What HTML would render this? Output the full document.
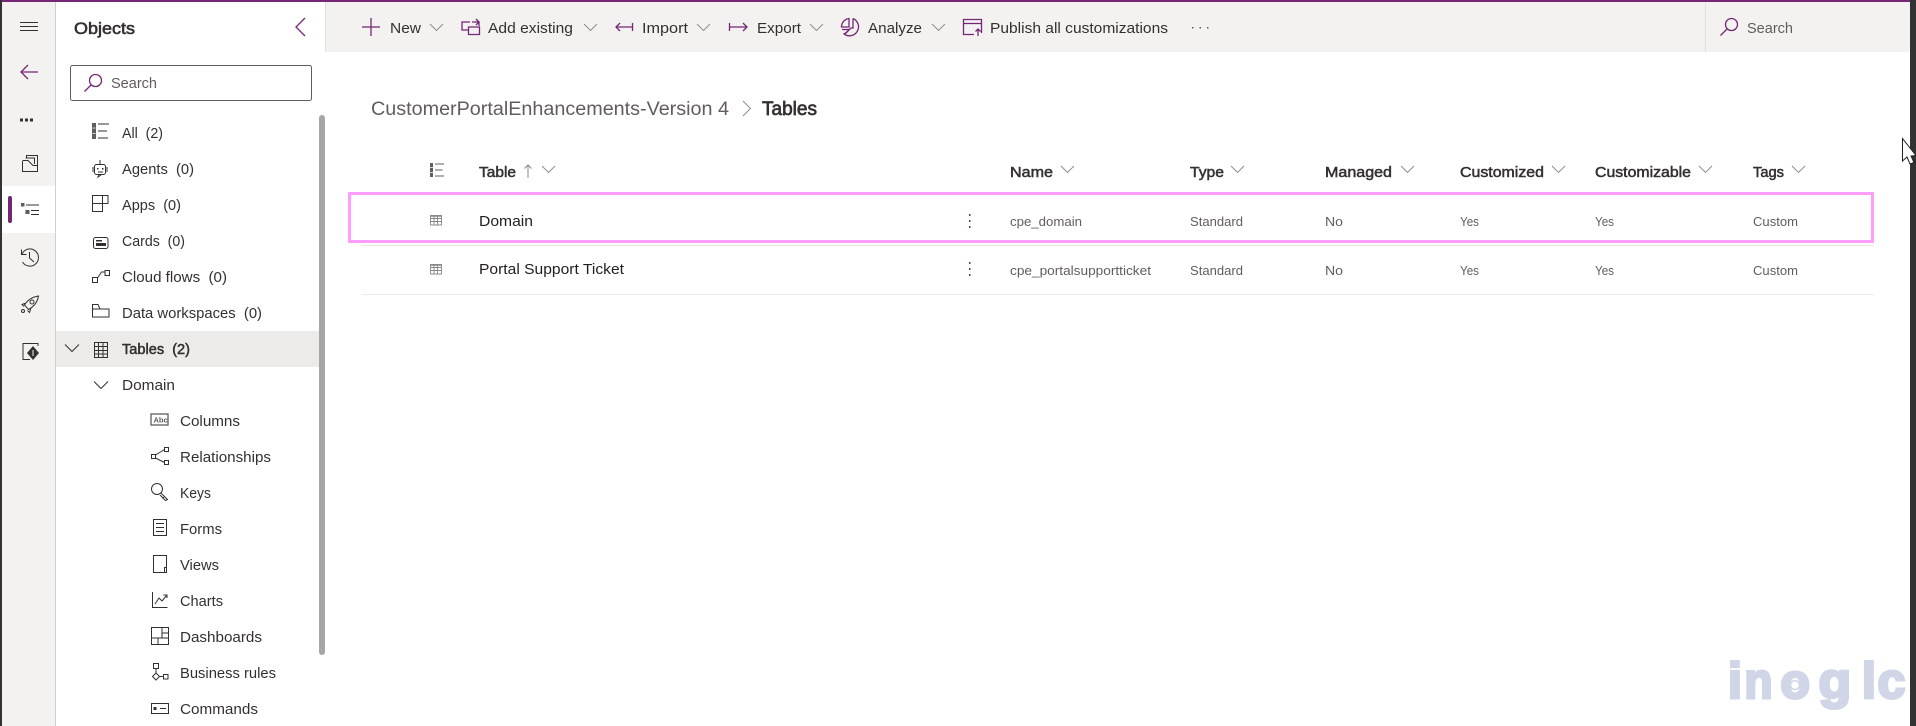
<!DOCTYPE html>
<html><head><meta charset="utf-8"><title>Tables</title>
<style>
html,body{margin:0;padding:0;background:#fff;width:1916px;height:726px;overflow:hidden}
svg{display:block;position:absolute;left:0;top:0}
text{font-family:"Liberation Sans",sans-serif;white-space:pre}
.n{font-size:14.6px;fill:#323130}
.t{font-size:14.6px;fill:#323130}
.h{font-size:14.6px;fill:#323130;stroke:#323130;stroke-width:.5}
.c{font-size:13px;fill:#605e5c}
.r{font-size:14.8px;fill:#201f1e}
.i{fill:none;stroke:#323130;stroke-width:1}
.p{fill:none;stroke:#742774;stroke-width:1.3}
.ch{fill:none;stroke:#8a8886;stroke-width:.9}
.w{font-size:50px;font-weight:bold;fill:#d0d6e8;stroke:#d0d6e8;stroke-width:3}
</style></head><body>
<svg width="1916" height="726" viewBox="0 0 1916 726" xmlns="http://www.w3.org/2000/svg">
<rect width="1916" height="726" fill="#fff"/>
<!-- toolbar -->
<rect x="326" y="2" width="1584" height="50" fill="#f3f2f1"/>
<rect x="1705" y="3" width="1" height="49" fill="#e1dfdd"/>
<!-- rail -->
<rect x="2" y="0" width="53" height="726" fill="#f3f2f1"/>
<rect x="55" y="0" width="1" height="726" fill="#d2d0ce"/>
<rect x="2" y="186" width="53" height="47" fill="#fff"/>
<rect x="8" y="196" width="4" height="27" rx="2" fill="#742774"/>
<rect x="325" y="2" width="1" height="50" fill="#e1dfdd"/>
<!-- rail icons -->
<path class="i" d="M20 22.5H38M20 26.5H38M20 30.5H38"/>
<path class="p" d="M38 72H21M28 65L21 72L28 79"/>
<path d="M20 118.5h3v3h-3zM25 118.5h3v3h-3zM30 118.5h3v3h-3z" fill="#323130"/>
<path class="i" stroke-width="1.2" d="M22.5 161V171.5H37.5V155.5H26.5V158M22.5 160.500H28L33 165.500H37M25.500 158H34.500V164"/>
<path class="i" stroke-width="1.200" d="M26 205H39M26 210.500h3v3h-3zM31 210.500H39M31 214.500H39"/><rect x="21" y="203" width="3.500" height="3.500" fill="#605e5c"/><rect x="26" y="210" width="3.500" height="4" fill="#605e5c"/>
<path class="i" stroke-width="1.2" d="M22 254A8.600 8.600 0 1 1 22.500 262M21.500 249.500V254.500H26.500M29.500 252V258L34 262"/>
<path class="i" d="M38.500 296C32 297 27.500 300 24.500 305L28.500 309.500C34 306.500 37.500 302 38.500 296ZM26 303L22 304.500L24 306.500M31 308L29.500 312.500L27.500 310.500"/>
<circle class="i" cx="32" cy="302" r="2"/><circle class="i" cx="23" cy="311" r="1.500"/>
<path class="i" d="M38 346V343.500H23V359.500H30"/>
<path d="M33 346L39 353L33 360L27 353Z" fill="#323130"/><rect x="32.500" y="350" width="1" height="6" fill="#f3f2f1"/>
<!-- nav -->
<text x="74" y="34" font-size="17" fill="#323130" stroke="#323130" stroke-width=".6" textLength="61" lengthAdjust="spacingAndGlyphs">Objects</text>
<path class="p" d="M305 18L296 27L305 36"/>
<rect x="70.500" y="65.500" width="241" height="35" rx="2" fill="#fff" stroke="#605e5c"/>
<path class="p" d="M84.500 91.500L91.500 84.500"/><circle class="p" cx="95.500" cy="80.500" r="6"/>
<text x="111" y="88" font-size="14.6" fill="#605e5c" textLength="46" lengthAdjust="spacingAndGlyphs">Search</text>
<rect x="56" y="331" width="263" height="36" fill="#edebe9"/>
<rect x="319" y="115" width="6" height="540" rx="3" fill="#a6a6a6"/>
<text class="n" x="122" y="138" textLength="41" lengthAdjust="spacingAndGlyphs">All  (2)</text>
<text class="n" x="122" y="174" textLength="72" lengthAdjust="spacingAndGlyphs">Agents  (0)</text>
<text class="n" x="122" y="210" textLength="59" lengthAdjust="spacingAndGlyphs">Apps  (0)</text>
<text class="n" x="122" y="246" textLength="63" lengthAdjust="spacingAndGlyphs">Cards  (0)</text>
<text class="n" x="122" y="282" textLength="105" lengthAdjust="spacingAndGlyphs">Cloud flows  (0)</text>
<text class="n" x="122" y="318" textLength="140" lengthAdjust="spacingAndGlyphs">Data workspaces  (0)</text>
<text class="h" x="122" y="354" textLength="68" lengthAdjust="spacingAndGlyphs">Tables  (2)</text>
<text class="n" x="122" y="390" textLength="53" lengthAdjust="spacingAndGlyphs">Domain</text>
<text class="n" x="180" y="426" textLength="60" lengthAdjust="spacingAndGlyphs">Columns</text>
<text class="n" x="180" y="462" textLength="91" lengthAdjust="spacingAndGlyphs">Relationships</text>
<text class="n" x="180" y="498" textLength="31" lengthAdjust="spacingAndGlyphs">Keys</text>
<text class="n" x="180" y="534" textLength="42" lengthAdjust="spacingAndGlyphs">Forms</text>
<text class="n" x="180" y="570" textLength="39" lengthAdjust="spacingAndGlyphs">Views</text>
<text class="n" x="180" y="606" textLength="43" lengthAdjust="spacingAndGlyphs">Charts</text>
<text class="n" x="180" y="642" textLength="82" lengthAdjust="spacingAndGlyphs">Dashboards</text>
<text class="n" x="180" y="678" textLength="96" lengthAdjust="spacingAndGlyphs">Business rules</text>
<text class="n" x="180" y="714" textLength="78" lengthAdjust="spacingAndGlyphs">Commands</text>
<!-- nav icons -->
<path d="M92 123h4v16h-4z" fill="#605e5c"/><path d="M92.500 128h3M92.500 133.500h3" stroke="#fff" stroke-width=".8"/>
<path class="i" d="M98 124H109M98 131H107M98 138H108"/>
<rect class="i" x="94.500" y="164.500" width="11" height="10" rx="2"/><path class="i" d="M100 160V164.500M93 167V172M107 167V172M99 175L98 177L101 175"/><path d="M97 168h1.500v1.500H97zM102 168h1.500v1.500H102zM98 171.500h5v1h-5z" fill="#323130"/>
<path class="i" stroke-width="1.200" d="M92.500 195.500H108V203.500H102.500V211.500H92.500ZM92.500 203.500H102.500V195.500"/>
<rect class="i" x="93.500" y="237.500" width="14.500" height="11" rx="2" stroke="#605e5c" stroke-width="1.500"/><path d="M96 240h6v1.500h-6zM96 243h10v3H96z" fill="#323130"/>
<path class="i" d="M92.500 277.500h5v5h-5zM105 270.500h4.500v5H105zM97.500 278L101.500 272H105"/>
<path class="i" d="M92.500 305V317H109V309H100L98 304.500H92.500ZM92.500 309H100" stroke-width="1.100"/>
<path class="i" d="M94.500 342.500H107.500V357.500H94.500ZM94.500 346.500H107.500M94.500 350.500H107.500M94.500 354H107.500M98.500 342.500V357.500M103 342.500V357.500" stroke-width="1.100"/>
<path class="i" d="M65 344.500L72 351.500L79 344.500"/>
<path class="i" d="M94 381.500L101 388.500L108 381.500"/>
<rect x="151" y="414" width="17" height="11" fill="none" stroke="#605e5c" stroke-width="1.300"/><text x="153.500" y="422.500" font-size="7.500" font-weight="bold" fill="#605e5c">Abc</text>
<path class="i" d="M151.500 454.500h4v4h-4zM164.500 447.500h4v4h-4zM164.500 460.500h4v4h-4zM155.500 455L164.500 449.500M155.500 458L164.500 462.500" stroke-width="1.100"/>
<circle class="i" cx="157" cy="489" r="5.500"/><path class="i" d="M161 493L167.500 499.500L165.500 500.500L160 495M164 497L162.500 498.500"/>
<path class="i" d="M153.500 519.500H166.500V535.500H153.500ZM156 523.500H164M156 527.500H164M156 531.500H164"/>
<path class="i" d="M153.500 555.500H166.500V572.500H153.500ZM164.500 572V567.500H166.500"/>
<path class="i" d="M152.500 592V607.500H167.500M155 604L159 598L162 601L167 595M163.500 595H167V598"/>
<path class="i" stroke-width="1.200" d="M151.500 627.500H168.500V644.500H151.500ZM151.500 638H168.500M162 627.500V638M158 638V644.500M162 633H168.500"/>
<path class="i" d="M153.500 663.500h5v5h-5zM156 668.500V673M156 673L159.500 676.500L156 680L152.500 676.500ZM159.500 676.500H163.500M163.500 674.500h4.500v4.500h-4.500z"/>
<path class="i" stroke-width="1.200" d="M151.500 703.500H168.500V713.500H151.500ZM160 708.500H166"/><rect x="153.500" y="707" width="3" height="3" fill="#323130"/>
<!-- toolbar content -->
<path class="p" d="M371 18V36M362 27H380"/>
<text class="t" x="390" y="33" textLength="31" lengthAdjust="spacingAndGlyphs">New</text>
<path class="ch" d="M430 24L436.500 30.500L443 24"/>
<path class="p" d="M470 22H462V30H468M468.500 27H479.500V34.500H468.500ZM472 22H479V26M476 19L479 22L476 25"/>
<text class="t" x="488" y="33" textLength="85" lengthAdjust="spacingAndGlyphs">Add existing</text>
<path class="ch" d="M584 24L590.500 30.500L597 24"/>
<path class="p" d="M632.500 23V31M632 27H616M620 23L616 27L620 31"/>
<text class="t" x="642" y="33" textLength="46" lengthAdjust="spacingAndGlyphs">Import</text>
<path class="ch" d="M697 24L703.500 30.500L710 24"/>
<path class="p" d="M729.500 23V31M730 27H747M743 23L747 27L743 31"/>
<text class="t" x="757" y="33" textLength="44" lengthAdjust="spacingAndGlyphs">Export</text>
<path class="ch" d="M810 24L816.500 30.500L823 24"/>
<path class="p" d="M853 18.500A9 9 0 1 1 843.500 33.500M853 18.500V28H851L844 34.500M849 18.500A8.500 8.500 0 0 0 841.500 27H849ZM842 29.500H849.500L845 34"/>
<text class="t" x="868" y="33" textLength="54" lengthAdjust="spacingAndGlyphs">Analyze</text>
<path class="ch" d="M932 24L938.500 30.500L945 24"/>
<path class="p" d="M974 34.500H963.500V19.500H981.500V33M963.500 23.500H981.500M978 36V29M975.500 31.500L978 29L980.500 31.500"/>
<text class="t" x="990" y="33" textLength="178" lengthAdjust="spacingAndGlyphs">Publish all customizations</text>
<path d="M1192 27h1.500v1.500H1192zM1199.500 27h1.500v1.500h-1.500zM1207 27h1.500v1.500H1207z" fill="#605e5c"/>
<path class="p" d="M1720.500 35.500L1727.500 28.500"/><circle class="p" cx="1731.500" cy="24.500" r="6"/>
<text x="1747" y="33" font-size="14.6" fill="#605e5c" textLength="46" lengthAdjust="spacingAndGlyphs">Search</text>
<!-- breadcrumb -->
<text x="371" y="115" font-size="19" fill="#605e5c" textLength="358" lengthAdjust="spacingAndGlyphs">CustomerPortalEnhancements-Version 4</text>
<path class="ch" d="M743 101L750.500 108.500L743 116" stroke="#605e5c"/>
<text x="762" y="115" font-size="19" fill="#323130" stroke="#323130" stroke-width=".7" textLength="55" lengthAdjust="spacingAndGlyphs">Tables</text>
<!-- header -->
<path d="M430 163h3v14h-3z" fill="#605e5c"/><path d="M430 167.500h3M430 172.500h3" stroke="#fff" stroke-width=".8"/>
<path class="i" style="stroke:#605e5c" d="M435 164H444M435 170H442.500M435 176H444"/>
<text class="h" x="479" y="177" textLength="37" lengthAdjust="spacingAndGlyphs">Table</text>
<path class="i" style="stroke:#8a8886" d="M528 178V165M524.500 168.500L528 165L531.500 168.500"/>
<path class="ch" d="M542 166L548.500 172.500L555 166"/>
<text class="h" x="1010" y="177" textLength="43" lengthAdjust="spacingAndGlyphs">Name</text>
<path class="ch" d="M1061 166L1067.500 172.500L1074 166"/>
<text class="h" x="1190" y="177" textLength="34" lengthAdjust="spacingAndGlyphs">Type</text>
<path class="ch" d="M1231 166L1237.500 172.500L1244 166"/>
<text class="h" x="1325" y="177" textLength="67" lengthAdjust="spacingAndGlyphs">Managed</text>
<path class="ch" d="M1401 166L1407.500 172.500L1414 166"/>
<text class="h" x="1460" y="177" textLength="84" lengthAdjust="spacingAndGlyphs">Customized</text>
<path class="ch" d="M1552 166L1558.500 172.500L1565 166"/>
<text class="h" x="1595" y="177" textLength="96" lengthAdjust="spacingAndGlyphs">Customizable</text>
<path class="ch" d="M1699 166L1705.500 172.500L1712 166"/>
<text class="h" x="1753" y="177" textLength="31" lengthAdjust="spacingAndGlyphs">Tags</text>
<path class="ch" d="M1792 166L1798.500 172.500L1805 166"/>
<!-- rows -->
<rect x="362" y="245" width="1512" height="1" fill="#edebe9"/>
<rect x="362" y="294" width="1512" height="1" fill="#edebe9"/>
<rect x="349.500" y="193.500" width="1523" height="48" fill="none" stroke="#ff9cff" stroke-width="3"/>
<g fill="none" stroke="#8a8886"><path d="M430.500 215.500H441.500V225H430.500ZM430.500 218.500H441.500M430.500 221.500H441.500M434 215.500V225M437.500 215.500V225" stroke-width=".9"/><path d="M430.500 216H441.500" stroke-width="1.500"/></g>
<g fill="none" stroke="#8a8886"><path d="M430.500 264.500H441.500V274H430.500ZM430.500 267.500H441.500M430.500 270.500H441.500M434 264.500V274M437.500 264.500V274" stroke-width=".9"/><path d="M430.500 265H441.500" stroke-width="1.500"/></g>
<text class="r" x="479" y="226" textLength="54" lengthAdjust="spacingAndGlyphs">Domain</text>
<text class="r" x="479" y="274" textLength="145" lengthAdjust="spacingAndGlyphs">Portal Support Ticket</text>
<path d="M969 214h1.500v2H969zM969 220h1.500v2H969zM969 226h1.500v2H969zM969 262h1.500v2H969zM969 268h1.500v2H969zM969 274h1.500v2H969z" fill="#742774"/>
<text class="c" x="1010" y="226" textLength="72" lengthAdjust="spacingAndGlyphs">cpe_domain</text>
<text class="c" x="1190" y="226" textLength="53" lengthAdjust="spacingAndGlyphs">Standard</text>
<text class="c" x="1325" y="226" textLength="18" lengthAdjust="spacingAndGlyphs">No</text>
<text class="c" x="1460" y="226" textLength="19" lengthAdjust="spacingAndGlyphs">Yes</text>
<text class="c" x="1595" y="226" textLength="19" lengthAdjust="spacingAndGlyphs">Yes</text>
<text class="c" x="1753" y="226" textLength="45" lengthAdjust="spacingAndGlyphs">Custom</text>
<text class="c" x="1010" y="275" textLength="141" lengthAdjust="spacingAndGlyphs">cpe_portalsupportticket</text>
<text class="c" x="1190" y="275" textLength="53" lengthAdjust="spacingAndGlyphs">Standard</text>
<text class="c" x="1325" y="275" textLength="18" lengthAdjust="spacingAndGlyphs">No</text>
<text class="c" x="1460" y="275" textLength="19" lengthAdjust="spacingAndGlyphs">Yes</text>
<text class="c" x="1595" y="275" textLength="19" lengthAdjust="spacingAndGlyphs">Yes</text>
<text class="c" x="1753" y="275" textLength="45" lengthAdjust="spacingAndGlyphs">Custom</text>
<!-- watermark -->
<text class="w" x="1728" y="698">i</text>
<text class="w" x="1744.500" y="698" textLength="28" lengthAdjust="spacingAndGlyphs">n</text>
<text class="w" x="1780.500" y="698" style="font-size:48px">o</text>
<circle cx="1795" cy="685" r="4.500" fill="none" stroke="#d0d6e8" stroke-width="1.500"/>
<text class="w" x="1818.500" y="698" textLength="32.600" lengthAdjust="spacingAndGlyphs">g</text>
<text class="w" x="1862" y="698">l</text>
<text class="w" x="1877.500" y="698">c</text>
<!-- window edges -->
<rect x="0" y="0" width="2" height="726" fill="#333"/>
<rect x="1910" y="0" width="6" height="726" fill="#333"/>
<rect x="2" y="0" width="1908" height="2" fill="#742774"/>
<!-- cursor -->
<path d="M1902.500 138.500V161L1907 157L1910 164L1914 162.500L1911 156L1916 155.500Z" fill="#fff" stroke="#222" stroke-width="1"/>
</svg>
</body></html>
